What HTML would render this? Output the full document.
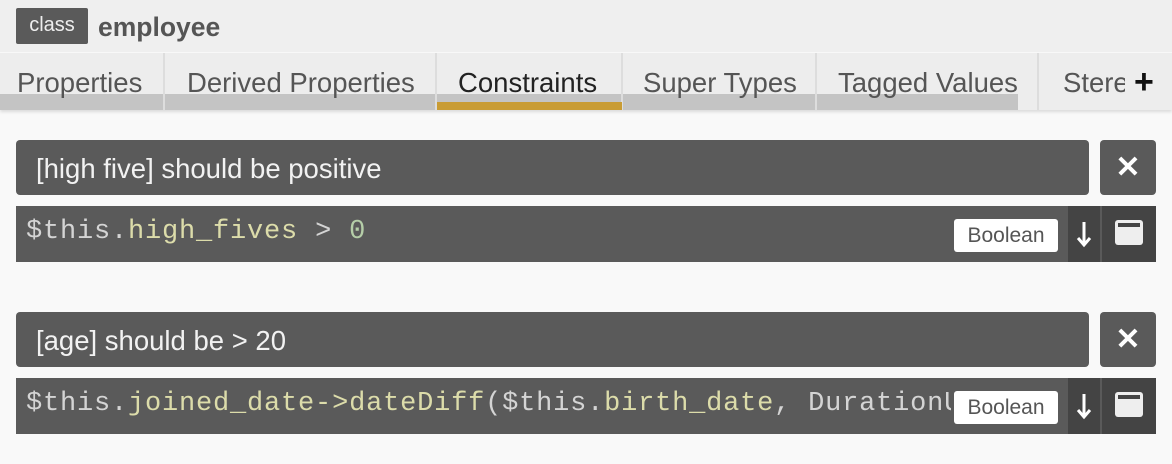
<!DOCTYPE html>
<html><head><style>
body{margin:0;width:1172px;height:464px;background:#f9f9f9;font-family:"Liberation Sans",sans-serif;position:relative;overflow:hidden}
.hdr{position:absolute;left:0;top:0;width:1172px;height:52px;background:#efefef}
.cls{position:absolute;left:16px;top:8px;width:72px;height:36px;background:#5a5a5a;border-radius:2px;color:#eee;font-size:20px;line-height:34px;text-align:center}
.name{position:absolute;left:98px;top:10px;font-size:26.5px;font-weight:bold;color:#555;line-height:34px}
.tabs{position:absolute;left:0;top:53px;width:1172px;height:57px;background:#ededed;box-shadow:0 2px 3px rgba(0,0,0,.12)}
.sb{position:absolute;left:0;top:41px;width:1018px;height:16px;background:#c4c4c4}
.tab{position:absolute;top:0;height:57px;font-size:27.5px;color:#555;line-height:60px;border-right:2px solid #ddd;box-sizing:border-box;white-space:nowrap;overflow:hidden}
.act{color:#222}
.ul{position:absolute;left:437px;top:49px;width:185px;height:8px;background:#c99c34}
.plus{position:absolute;left:1134px;top:14px;font-size:34px;font-weight:bold;color:#111;line-height:30px}
.title{position:absolute;left:16px;width:1073px;height:55px;background:#5a5a5a;border-radius:4px;color:#f2f2f2;font-size:27.5px;line-height:57px;padding-left:20px;box-sizing:border-box}
.x{position:absolute;left:1100px;width:56px;height:55px;background:#5a5a5a;border-radius:4px;color:#fff;font-size:30px;font-weight:bold;text-align:center;line-height:55px}
.code{position:absolute;left:16px;width:1140px;height:56px;background:#5a5a5a;overflow:hidden}
.code pre{margin:0;position:absolute;left:10px;top:0;line-height:52px;font-family:"Liberation Mono",monospace;font-size:27px;letter-spacing:0.8px;color:#d4d4d4;width:925px;overflow:hidden}
.y{color:#dcdcaa}.n{color:#b5cea8}
.bool{position:absolute;left:938px;top:13px;width:104px;height:33px;background:#fff;border-radius:3px;color:#555;font-size:21px;line-height:34px;text-align:center}
.arr{position:absolute;left:1052px;top:0;width:32px;height:56px;background:#444}
.win{position:absolute;left:1086px;top:0;width:54px;height:56px;background:#444}
.win i{position:absolute;left:13px;top:14px;width:28px;height:25px;background:#eee;border-radius:3px}
.win i:after{content:"";position:absolute;left:3px;top:3px;width:22px;height:4px;background:#444}
</style></head><body>
<div class="hdr"><div class="cls">class</div><div class="name">employee</div></div>
<div class="tabs">
<div class="sb"></div>
<div class="tab" style="left:0;width:165px;padding-left:17px">Properties</div>
<div class="tab" style="left:165px;width:272px;padding-left:22px">Derived Properties</div>
<div class="tab act" style="left:437px;width:186px;padding-left:21px">Constraints</div>
<div class="tab" style="left:623px;width:194px;padding-left:20px">Super Types</div>
<div class="tab" style="left:817px;width:222px;padding-left:21px">Tagged Values</div>
<div class="tab" style="left:1039px;width:86px;border:none;padding-left:24px">Stere</div>
<div class="ul"></div>
<div class="plus">+</div>
</div>
<div class="title" style="top:140px">[high five] should be positive</div><div class="x" style="top:140px">✕</div>
<div class="code" style="top:206px"><pre>$this.<span class="y">high_fives</span> &gt; <span class="n">0</span></pre><div class="bool">Boolean</div><div class="arr"><svg width="32" height="56"><path d="M16 16v22M10 32l6 7 6-7" stroke="#fff" stroke-width="3" fill="none"/></svg></div><div class="win"><i></i></div></div>
<div class="title" style="top:312px">[age] should be &gt; 20</div><div class="x" style="top:312px">✕</div>
<div class="code" style="top:378px"><pre>$this.<span class="y">joined_date-&gt;dateDiff</span>($this.<span class="y">birth_date</span>, DurationUnit</pre><div class="bool">Boolean</div><div class="arr"><svg width="32" height="56"><path d="M16 16v22M10 32l6 7 6-7" stroke="#fff" stroke-width="3" fill="none"/></svg></div><div class="win"><i></i></div></div>
</body></html>
